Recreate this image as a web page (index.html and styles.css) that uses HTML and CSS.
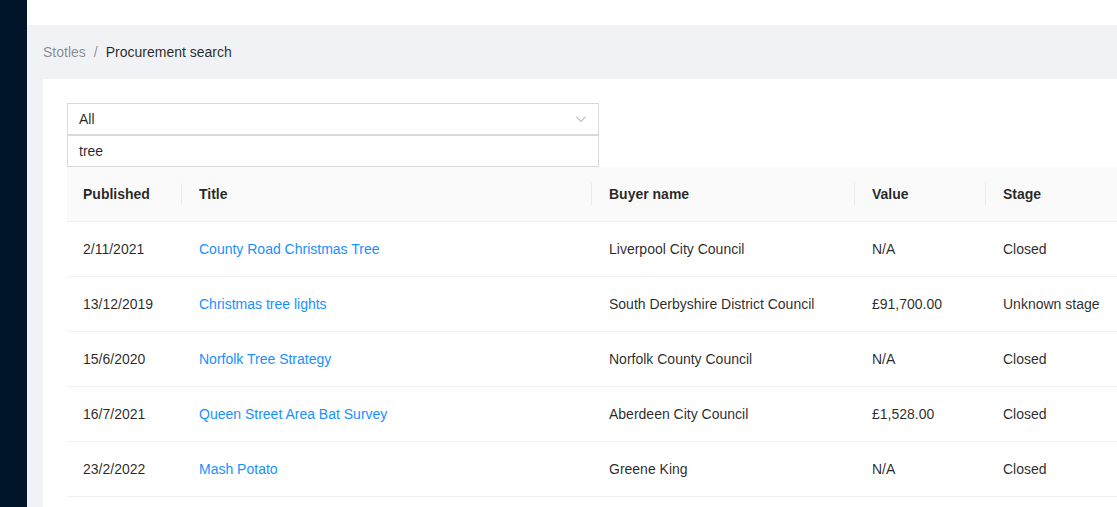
FILE: index.html
```html
<!DOCTYPE html>
<html>
<head>
<meta charset="utf-8">
<link rel="stylesheet" href="styles.css">
</head>
<body>
<div class="app">
  <aside class="sider"></aside>
  <div class="main">
    <header class="header"></header>
    <div class="body">
      <nav class="breadcrumb">
        <span class="crumb-link">Stotles</span>
        <span class="crumb-sep">/</span>
        <span class="crumb-current">Procurement search</span>
      </nav>
      <section class="content">
        <div class="filters">
          <div class="select">
            <span class="select-value">All</span>
            <svg class="select-arrow" viewBox="0 0 12 12" width="12" height="12"><path d="M1.2 3.6 L6 8.4 L10.8 3.6" fill="none" stroke="currentColor" stroke-width="1.1"/></svg>
          </div>
          <div class="input">tree</div>
        </div>
        <table class="table">
          <colgroup>
            <col class="c1"><col class="c2"><col class="c3"><col class="c4"><col class="c5">
          </colgroup>
          <thead>
            <tr>
              <th>Published</th>
              <th class="sep">Title</th>
              <th class="sep">Buyer name</th>
              <th class="sep">Value</th>
              <th class="sep">Stage</th>
            </tr>
          </thead>
          <tbody>
            <tr><td>2/11/2021</td><td><a class="link">County Road Christmas Tree</a></td><td>Liverpool City Council</td><td>N/A</td><td>Closed</td></tr>
            <tr><td>13/12/2019</td><td><a class="link">Christmas tree lights</a></td><td>South Derbyshire District Council</td><td>£91,700.00</td><td>Unknown stage</td></tr>
            <tr><td>15/6/2020</td><td><a class="link">Norfolk Tree Strategy</a></td><td>Norfolk County Council</td><td>N/A</td><td>Closed</td></tr>
            <tr><td>16/7/2021</td><td><a class="link">Queen Street Area Bat Survey</a></td><td>Aberdeen City Council</td><td>£1,528.00</td><td>Closed</td></tr>
            <tr><td>23/2/2022</td><td><a class="link">Mash Potato</a></td><td>Greene King</td><td>N/A</td><td>Closed</td></tr>
          </tbody>
        </table>
      </section>
    </div>
  </div>
</div>
</body>
</html>
```
FILE: styles.css
```css
* { box-sizing: border-box; }
html, body {
  margin: 0;
  padding: 0;
  height: 100%;
  overflow: hidden;
}
body {
  font-family: "Liberation Sans", Arial, sans-serif;
  font-size: 14px;
  color: rgba(0, 0, 0, 0.85);
  background: #f0f2f5;
}
.app {
  display: flex;
  height: 507px;
}
.sider {
  width: 27px;
  flex: none;
  background: #001529;
}
.main {
  flex: 1;
  display: flex;
  flex-direction: column;
  min-width: 0;
}
.header {
  height: 25px;
  flex: none;
  background: #fff;
}
.body {
  flex: 1;
  padding: 0 0 0 16px;
  background: #f0f2f5;
  display: flex;
  flex-direction: column;
}
.breadcrumb {
  padding: 16px 0;
  line-height: 22px;
  height: 54px;
  display: flex;
  gap: 8px;
}
.crumb-link, .crumb-sep { color: rgba(0, 0, 0, 0.45); }
.crumb-current { color: rgba(0, 0, 0, 0.85); }
.content {
  flex: 1;
  background: #fff;
  padding: 24px 0 0 24px;
  overflow: hidden;
}
.filters {
  width: 532px;
  display: flex;
  flex-direction: column;
}
.select, .input {
  height: 32px;
  border: 1px solid #d9d9d9;
  padding: 0 11px;
  display: flex;
  align-items: center;
  background: #fff;
  line-height: 22px;
}
.select { justify-content: space-between; }
.select-arrow { color: rgba(0, 0, 0, 0.25); }
.table {
  border-collapse: collapse;
  table-layout: fixed;
  width: 1100px;
}
.c1 { width: 115px; }
.c2 { width: 410px; }
.c3 { width: 263px; }
.c4 { width: 131px; }
.c5 { width: 181px; }
.table th {
  background: #fafafa;
  height: 54px;
  padding: 0 16px;
  text-align: left;
  font-weight: 700;
  border-bottom: 1px solid #f0f0f0;
  position: relative;
  white-space: nowrap;
}
.table th.sep::before {
  content: "";
  position: absolute;
  left: -1px;
  top: 50%;
  height: 22px;
  margin-top: -11px;
  width: 1px;
  background: rgba(0, 0, 0, 0.06);
}
.table td {
  height: 55px;
  padding: 0 16px 0 17px;
  border-bottom: 1px solid #f0f0f0;
  white-space: nowrap;
}
.table td:first-child { padding-left: 16px; }
.table th + th { padding-left: 17px; }
.link { color: #1890ff; text-decoration: none; cursor: pointer; }
```
